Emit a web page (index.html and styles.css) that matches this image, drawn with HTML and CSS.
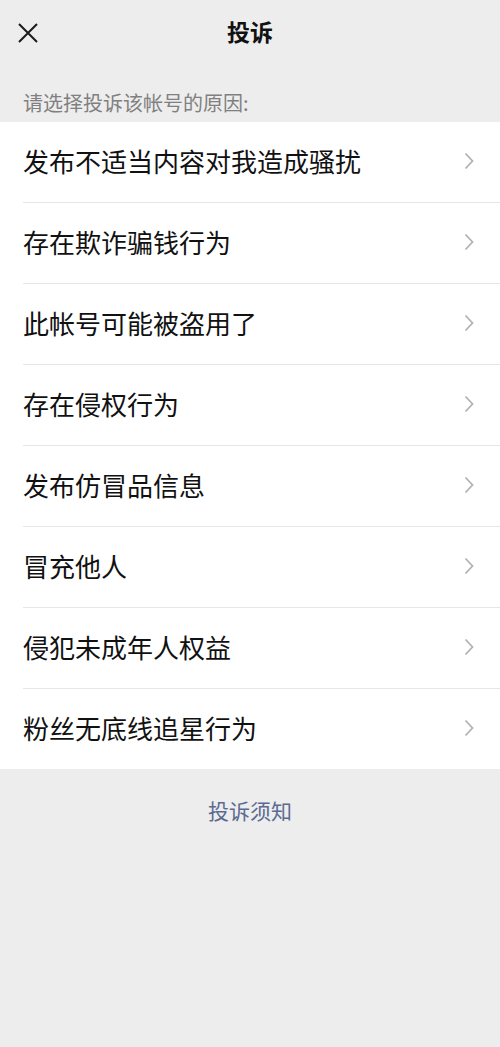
FILE: index.html
```html
<!DOCTYPE html>
<html lang="zh-CN">
<head>
<meta charset="utf-8">
<title>投诉</title>
<link rel="stylesheet" href="styles.css">
</head>
<body>
<div class="page">
  <header class="topbar">
    <svg class="close" viewBox="0 0 20 20" width="20" height="20"><path d="M1 1L19 19M19 1L1 19" stroke="#1a1a1a" stroke-width="2" fill="none"/></svg>
    <h1 class="title">投诉</h1>
  </header>
  <div class="label">请选择投诉该帐号的原因:</div>
  <ul class="list">
    <li class="row"><span class="text">发布不适当内容对我造成骚扰</span><svg class="chev" viewBox="0 0 10 18" width="10" height="18"><path d="M1.5 1.5L8.5 9L1.5 16.5" stroke="#b2b2b2" stroke-width="1.8" fill="none"/></svg></li>
    <li class="row"><span class="text">存在欺诈骗钱行为</span><svg class="chev" viewBox="0 0 10 18" width="10" height="18"><path d="M1.5 1.5L8.5 9L1.5 16.5" stroke="#b2b2b2" stroke-width="1.8" fill="none"/></svg></li>
    <li class="row"><span class="text">此帐号可能被盗用了</span><svg class="chev" viewBox="0 0 10 18" width="10" height="18"><path d="M1.5 1.5L8.5 9L1.5 16.5" stroke="#b2b2b2" stroke-width="1.8" fill="none"/></svg></li>
    <li class="row"><span class="text">存在侵权行为</span><svg class="chev" viewBox="0 0 10 18" width="10" height="18"><path d="M1.5 1.5L8.5 9L1.5 16.5" stroke="#b2b2b2" stroke-width="1.8" fill="none"/></svg></li>
    <li class="row"><span class="text">发布仿冒品信息</span><svg class="chev" viewBox="0 0 10 18" width="10" height="18"><path d="M1.5 1.5L8.5 9L1.5 16.5" stroke="#b2b2b2" stroke-width="1.8" fill="none"/></svg></li>
    <li class="row"><span class="text">冒充他人</span><svg class="chev" viewBox="0 0 10 18" width="10" height="18"><path d="M1.5 1.5L8.5 9L1.5 16.5" stroke="#b2b2b2" stroke-width="1.8" fill="none"/></svg></li>
    <li class="row"><span class="text">侵犯未成年人权益</span><svg class="chev" viewBox="0 0 10 18" width="10" height="18"><path d="M1.5 1.5L8.5 9L1.5 16.5" stroke="#b2b2b2" stroke-width="1.8" fill="none"/></svg></li>
    <li class="row"><span class="text">粉丝无底线追星行为</span><svg class="chev" viewBox="0 0 10 18" width="10" height="18"><path d="M1.5 1.5L8.5 9L1.5 16.5" stroke="#b2b2b2" stroke-width="1.8" fill="none"/></svg></li>
  </ul>
  <div class="footer"><a class="notice">投诉须知</a></div>
</div>
</body>
</html>
```
FILE: styles.css
```css
html, body {
  margin: 0;
  padding: 0;
  background: #ededed;
}
.page {
  font-family: "Noto Sans CJK SC", "Noto Sans", sans-serif;
  min-height: 1047px;
  background: #ededed;
}
.topbar {
  height: 66px;
  display: grid;
  grid-template-columns: 1fr;
  align-items: center;
  justify-items: center;
  position: relative;
}
.close {
  position: absolute;
  left: 18px;
  top: 23px;
}
.title {
  margin: 0 0 5px 0;
  font-size: 23px;
  font-weight: 700;
  color: #111;
  line-height: 30px;
}
.label {
  height: 56px;
  box-sizing: border-box;
  display: flex;
  align-items: flex-end;
  padding: 0 0 6px 23px;
  font-size: 20px;
  line-height: 26px;
  color: #808080;
}
.list {
  list-style: none;
  margin: 0;
  padding: 0;
  background: #fff;
}
.row {
  height: 80px;
  margin-left: 23px;
  padding-right: 26px;
  display: flex;
  align-items: center;
  justify-content: space-between;
}
.row + .row {
  border-top: 1px solid #e6e6e6;
}
.text {
  font-size: 26px;
  line-height: 34px;
  margin-bottom: 3px;
  color: #111;
}
.chev {
  margin-bottom: 2px;
}
.footer {
  display: flex;
  justify-content: center;
  padding-top: 27px;
}
.notice {
  font-size: 21px;
  line-height: 28px;
  color: #5b6a91;
}
```
